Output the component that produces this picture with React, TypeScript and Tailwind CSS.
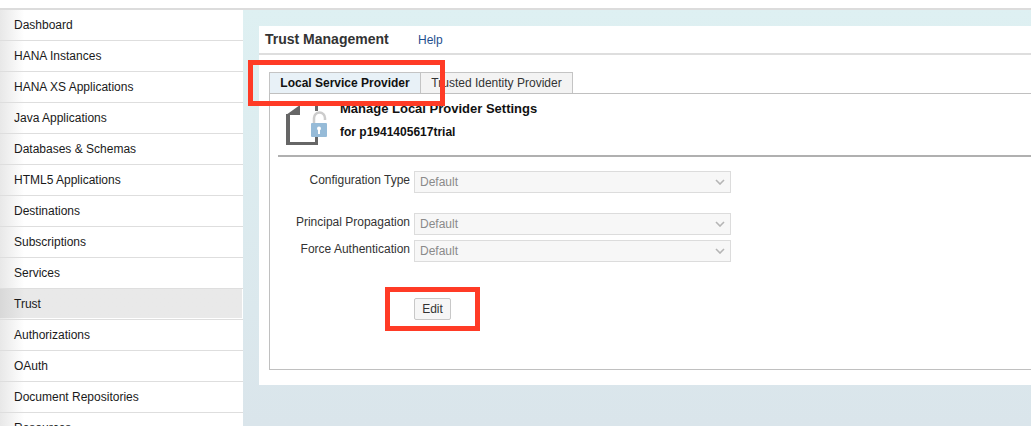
const items = ["Dashboard","HANA Instances","HANA XS Applications","Java Applications","Databases & Schemas","HTML5 Applications","Destinations","Subscriptions","Services","Trust","Authorizations","OAuth","Document Repositories","Resources"];

function Sel() {
  return (
    <div className="flex h-[22px] w-[317px] items-center justify-between border border-[#dcdcdc] bg-[#f7f7f7] pl-[5px] pr-[5px] text-[12px] text-[#8a8a8a]">
      <span>Default</span>
      <svg width="10" height="6" viewBox="0 0 10 6" fill="none" stroke="#b5b5b5" strokeWidth="1.6"><path d="M1 1l4 4 4-4" /></svg>
    </div>
  );
}

function Field({ label, className = "" }: { label: string; className?: string }) {
  return (
    <div className={`flex items-start ${className}`}>
      <div className="w-[132px] pt-[2px] text-right text-[12px] leading-[15px] text-[#333]">{label}</div>
      <div className="ml-1"><Sel /></div>
    </div>
  );
}

export default function App() {
  return (
    <div className="relative h-[426px] w-[1031px] overflow-hidden bg-white font-['Liberation_Sans',Arial,sans-serif]">
      <div className="h-2 bg-white" />
      <div className="h-[2px] bg-[#dcdcdc]" />
      <div className="flex h-[416px]">
        <nav className="w-[243px] shrink-0 bg-white">
          {items.map((t) => (
            <div key={t} className="h-[31px] border-b border-[#dedede] bg-gradient-to-r from-[#e8e8e8] via-white via-[10%] to-white">
              {t === "Trust" ? (
                <div className="flex h-[29px] w-[242px] items-center bg-gradient-to-r from-[#d8d8d8] via-[#e9e9e9] via-[10%] to-[#e9e9e9] pl-[14px] text-[12px] text-[#1a1a1a]">{t}</div>
              ) : (
                <div className="flex h-[30px] items-center pl-[14px] text-[12px] text-[#1a1a1a]">{t}</div>
              )}
            </div>
          ))}
        </nav>
        <main className="flex-1 bg-gradient-to-b from-[#def0f2] to-[#dae5eb] pl-4 pt-4">
          <div className="h-[359px] bg-white">
            <div className="flex h-[29px] items-center border-b-2 border-[#dedede] pl-[6px]">
              <span className="w-[153px] text-[14px] font-bold text-[#333]">Trust Management</span>
              <span className="text-[12px] text-[#1f4f8f]">Help</span>
            </div>
            <div className="pl-[10px] pt-[17px]">
              <div className="flex h-[21px] items-stretch">
                <div className="flex w-[152px] items-center justify-center border border-b-0 border-[#c4c4c4] bg-[#e8f1f7] text-[12px] font-bold text-[#111]">Local Service Provider</div>
                <div className="flex w-[152px] items-center justify-center border border-b-0 border-l-0 border-[#c4c4c4] bg-[#f3f3f3] text-[12px] text-[#333]">Trusted Identity Provider</div>
              </div>
              <div className="h-[277px] border-b border-l border-t border-[#c0c0c0] pl-2">
                <div className="flex h-[63px] border-b-2 border-[#b0b0b0]">
                  <svg className="ml-[8px] mt-[11px]" width="42" height="40" viewBox="0 0 42 40">
                    <path d="M0 10L14 0v10z" fill="#666" />
                    <rect x="0" y="9" width="4" height="31" fill="#666" />
                    <rect x="0" y="37" width="32" height="3" fill="#666" />
                    <rect x="29" y="31" width="3" height="9" fill="#666" />
                    <rect x="29" y="0" width="3" height="6" fill="#666" />
                    <path d="M28 18v-5a5.5 5.5 0 0 1 11 0v2" fill="none" stroke="#ccc" strokeWidth="2.5" />
                    <rect x="25" y="18" width="16" height="14" rx="1" fill="#96bbd8" />
                    <circle cx="33" cy="23.5" r="2" fill="#fff" />
                    <rect x="32" y="24" width="2" height="5" fill="#fff" />
                  </svg>
                  <div className="ml-[12px] font-bold leading-[23px] text-[#111]">
                    <div className="mt-[3px] text-[13px]">Manage Local Provider Settings</div>
                    <div className="mt-[1px] text-[12px]">for p1941405617trial</div>
                  </div>
                </div>
                <Field label="Configuration Type" className="mt-[14px]" />
                <Field label="Principal Propagation" className="mt-[20px]" />
                <Field label="Force Authentication" className="mt-[5px]" />
                <button className="ml-[136px] mt-[36px] block h-[22px] w-[37px] rounded-[2px] border border-[#c8c8c8] bg-[#f6f6f6] text-[12px] text-[#333]">Edit</button>
              </div>
            </div>
          </div>
        </main>
      </div>
      <div className="absolute left-[248px] top-[60px] h-[46px] w-[197px] border-[5px] border-[#ff3b26]" />
      <div className="absolute left-[385px] top-[287px] h-[44px] w-[95px] border-[5px] border-[#ff3b26]" />
    </div>
  );
}
